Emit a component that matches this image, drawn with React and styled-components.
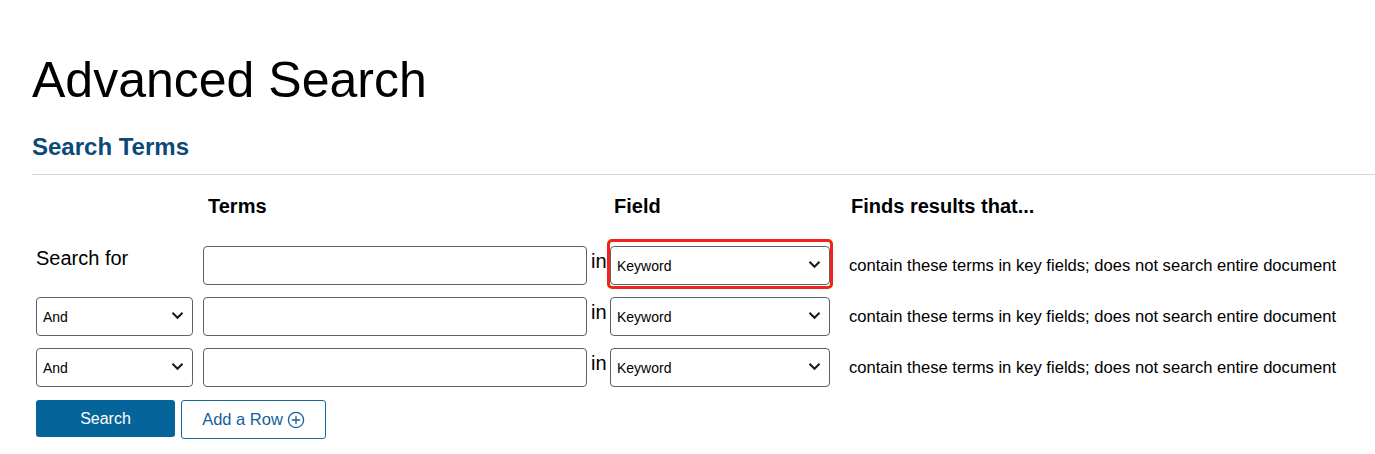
import React from 'react';
import styled, { createGlobalStyle } from 'styled-components';

const GlobalStyle = createGlobalStyle`
  html, body {
    margin: 0;
    padding: 0;
    background: #fff;
  }
  body {
    font-family: "Liberation Sans", Arial, sans-serif;
    color: #000;
  }
`;

const Page = styled.div`
  padding: 51px 0 0 32px;
`;

const Title = styled.h1`
  margin: 0;
  font-size: 50px;
  line-height: 58px;
  font-weight: 400;
`;

const SectionHeading = styled.h2`
  margin: 24px 0 0;
  padding-bottom: 13px;
  border-bottom: 1px solid #d6d6d6;
  font-size: 24px;
  line-height: 28px;
  font-weight: 700;
  color: #0b4a78;
`;

const Grid = styled.div`
  display: grid;
  grid-template-columns: 167px 384px 23px 239px 1fr;
  grid-auto-rows: 39px;
  row-gap: 12px;
  margin: 20px 0 0 4px;
`;

const HeaderRow = styled.div`
  display: contents;
`;

const HeaderCell = styled.div`
  font-size: 20px;
  line-height: 24px;
  font-weight: 700;
  padding-left: ${p => p.$indent || 0}px;
  margin-top: -1px;
  margin-bottom: 16px;
  grid-column: ${p => p.$col};
`;

const Label = styled.div`
  font-size: 20px;
  line-height: 24px;
`;

const InWord = styled.div`
  font-size: 20px;
  line-height: 24px;
  padding: 3px 0 0 4px;
`;

const TextInput = styled.input`
  box-sizing: border-box;
  width: 384px;
  height: 39px;
  border: 1px solid #5b6268;
  border-radius: 4px;
  padding: 0 8px;
  font-family: inherit;
  font-size: 16px;
  background: #fff;
  outline: none;
`;

const SelectWrap = styled.div`
  position: relative;
  width: ${p => p.$width}px;
  height: 39px;
`;

const Select = styled.select`
  appearance: none;
  -webkit-appearance: none;
  box-sizing: border-box;
  width: 100%;
  height: 100%;
  border: 1px solid #5b6268;
  border-radius: 4px;
  padding: 0 28px 0 6px;
  font-family: inherit;
  font-size: 14px;
  color: #000;
  background: #fff;
  outline: none;
`;

const Chevron = styled.svg`
  position: absolute;
  right: 9px;
  top: 50%;
  width: 13px;
  height: 9px;
  margin-top: -6px;
  pointer-events: none;
`;

const Highlight = styled.span`
  position: absolute;
  top: -7px;
  left: -3px;
  right: -3px;
  bottom: -4px;
  border: 3.5px solid #f4231a;
  border-radius: 5px;
  pointer-events: none;
`;

const Description = styled.div`
  display: flex;
  align-items: center;
  font-size: 16.6px;
`;

const Actions = styled.div`
  display: flex;
  gap: 6px;
  margin: 13px 0 0 4px;
`;

const Button = styled.button`
  box-sizing: border-box;
  padding: 0;
  border-radius: 3px;
  font-family: inherit;
  font-size: 16px;
  display: inline-flex;
  align-items: center;
  justify-content: center;
  gap: 4px;
  cursor: pointer;
`;

const PrimaryButton = styled(Button)`
  width: 139px;
  height: 37px;
  border: none;
  background: #05649a;
  color: #fff;
`;

const OutlineButton = styled(Button)`
  width: 145px;
  height: 39px;
  border: 1px solid #13689c;
  background: #fff;
  color: #13609a;
  font-size: 16.5px;
`;

const ChevronIcon = () => (
  <Chevron viewBox="0 0 13 9">
    <path d="M1.5 1.8 L6.5 6.8 L11.5 1.8" fill="none" stroke="#1a1a1a" strokeWidth="2" />
  </Chevron>
);

const PlusCircle = () => (
  <svg width="18" height="18" viewBox="0 0 18 18">
    <circle cx="9" cy="9" r="7.6" fill="none" stroke="currentColor" strokeWidth="1.3" />
    <path d="M9 4.8 V13.2 M4.8 9 H13.2" stroke="currentColor" strokeWidth="1.3" />
  </svg>
);

const DESC = 'contain these terms in key fields; does not search entire document';

function FieldSelect({ highlighted }) {
  return (
    <SelectWrap $width={220}>
      <Select defaultValue="keyword">
        <option value="keyword">Keyword</option>
        <option value="title">Title</option>
        <option value="author">Author</option>
      </Select>
      <ChevronIcon />
      {highlighted && <Highlight />}
    </SelectWrap>
  );
}

function BoolSelect() {
  return (
    <SelectWrap $width={157}>
      <Select defaultValue="and">
        <option value="and">And</option>
        <option value="or">Or</option>
        <option value="not">Not</option>
      </Select>
      <ChevronIcon />
    </SelectWrap>
  );
}

export default function App() {
  const rows = [0, 1, 2];
  return (
    <Page>
      <GlobalStyle />
      <Title>Advanced Search</Title>
      <SectionHeading>Search Terms</SectionHeading>
      <Grid>
        <HeaderRow>
          <HeaderCell $col={2} $indent={5}>Terms</HeaderCell>
          <HeaderCell $col={4} $indent={4}>Field</HeaderCell>
          <HeaderCell $col={5} $indent={2}>Finds results that...</HeaderCell>
        </HeaderRow>
        {rows.map(i => (
          <React.Fragment key={i}>
            {i === 0 ? <Label>Search for</Label> : <BoolSelect />}
            <TextInput type="text" aria-label="Terms" />
            <InWord>in</InWord>
            <FieldSelect highlighted={i === 0} />
            <Description>{DESC}</Description>
          </React.Fragment>
        ))}
      </Grid>
      <Actions>
        <PrimaryButton>Search</PrimaryButton>
        <OutlineButton>
          Add a Row <PlusCircle />
        </OutlineButton>
      </Actions>
    </Page>
  );
}
